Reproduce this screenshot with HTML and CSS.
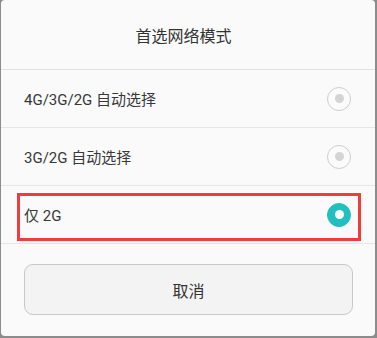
FILE: index.html
```html
<!DOCTYPE html>
<html lang="zh-CN">
<head>
<meta charset="utf-8">
<title>首选网络模式</title>
<link rel="stylesheet" href="styles.css">
</head>
<body>
<div class="dialog">
  <div class="header">首选网络模式</div>
  <div class="row">
    <span class="label">4G/3G/2G 自动选择</span>
    <span class="radio"><span class="dot"></span></span>
  </div>
  <div class="row">
    <span class="label">3G/2G 自动选择</span>
    <span class="radio"><span class="dot"></span></span>
  </div>
  <div class="row selected-row">
    <span class="label">仅 2G</span>
    <span class="radio on"><span class="dot"></span></span>
    <span class="highlight"></span>
  </div>
  <div class="footer">
    <div class="button">取消</div>
  </div>
</div>
</body>
</html>
```

FILE: styles.css
```css
html, body {
  margin: 0;
  padding: 0;
}
body {
  width: 377px;
  height: 338px;
  background: #8c8c8c;
  font-family: Roboto, "Noto Sans CJK SC", sans-serif;
  color: #333333;
  overflow: hidden;
}
.dialog {
  margin-left: 1px;
  width: 374px;
  height: 336px;
  background: #fafafa;
  border-radius: 4px;
  display: flex;
  flex-direction: column;
}
.header {
  height: 69px;
  display: flex;
  align-items: center;
  justify-content: center;
  padding-right: 9px;
  font-size: 16px;
  border-bottom: 1px solid #e2e2e2;
  flex-shrink: 0;
}
.row {
  position: relative;
  height: 57px;
  display: flex;
  align-items: center;
  justify-content: space-between;
  padding: 0 24px 0 23px;
  border-bottom: 1px solid #e6e6e6;
  flex-shrink: 0;
}
.label {
  font-size: 15px;
  color: #383838;
}
.radio {
  width: 22px;
  height: 22px;
  border: 1px solid #cdcdcd;
  border-radius: 50%;
  display: flex;
  align-items: center;
  justify-content: center;
  background: #fbfbfb;
}
.radio .dot {
  width: 9px;
  height: 9px;
  border-radius: 50%;
  background: #d4d4d4;
}
.radio.on {
  border-color: #22bfc0;
  background: #22bfc0;
}
.radio.on .dot {
  background: #ffffff;
}
.highlight {
  position: absolute;
  left: 16px;
  top: 7px;
  width: 338px;
  height: 42px;
  border: 3px solid #f23b3b;
}
.footer {
  flex: 1;
  display: flex;
  align-items: flex-start;
  padding: 20px 22px 0 23px;
}
.button {
  flex: 1;
  height: 49px;
  border: 1px solid #c8c8c8;
  border-radius: 9px;
  background: #f3f3f3;
  display: flex;
  align-items: center;
  justify-content: center;
  font-size: 16px;
  color: #333333;
}
```
